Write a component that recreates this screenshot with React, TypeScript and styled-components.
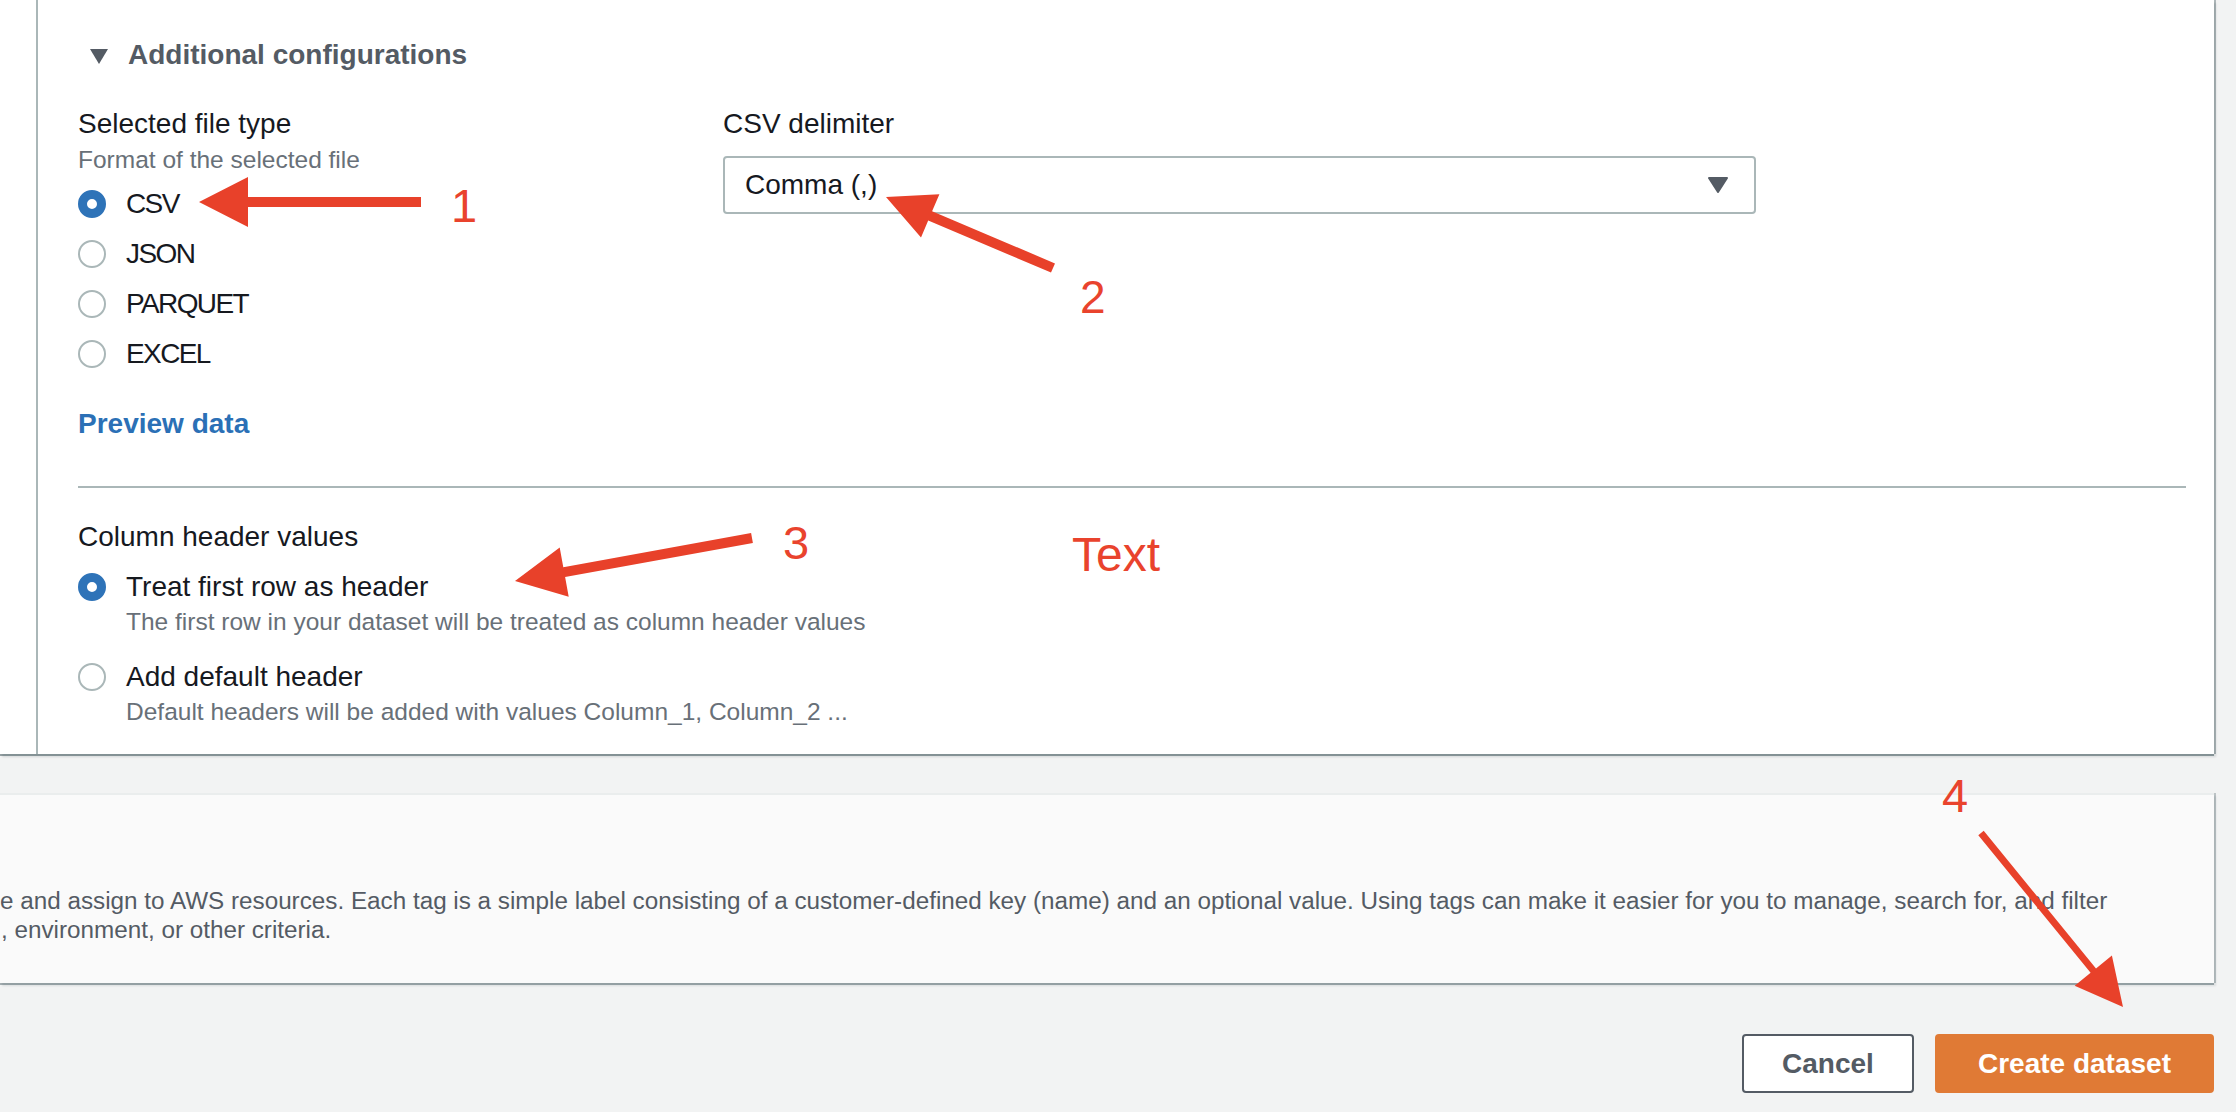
import React from "react";
import styled, { createGlobalStyle } from "styled-components";

const GlobalStyle = createGlobalStyle`
  html, body { margin: 0; padding: 0; background: #f2f3f3; }
  body { font-family: "Liberation Sans", Arial, sans-serif; color: #16191f; }
  * { box-sizing: border-box; }
`;

const Page = styled.div`
  position: relative;
  width: 2236px;
  height: 1112px;
  overflow: hidden;
  background: #f2f3f3;
  display: flex;
  flex-direction: column;
  padding-right: 22px;
`;

const ConfigPanel = styled.section`
  flex: none;
  height: 754px;
  background: #ffffff;
  padding-left: 36px;
  box-shadow: 0 2px 0 0 rgba(0, 28, 36, 0.38), 2px 0 0 0 rgba(0, 28, 36, 0.28),
    2px 3px 2px 0 rgba(0, 28, 36, 0.12);
`;

const PanelInner = styled.div`
  height: 100%;
  border-left: 2px solid #aab7b8;
  padding: 35px 28px 0 40px;
`;

const SectionHeader = styled.div`
  display: flex;
  align-items: center;
  gap: 20px;
  padding-left: 12px;
  font-size: 28px;
  font-weight: 700;
  line-height: 40px;
  color: #545b64;
`;

const Caret = styled.svg`
  flex: none;
  margin-top: 3px;
`;

const FieldsGrid = styled.div`
  display: grid;
  grid-template-columns: 605px 1033px;
  column-gap: 40px;
  margin-top: 29px;
`;

const Field = styled.div`
  display: flex;
  flex-direction: column;
`;

const FieldLabel = styled.div<{ $gap?: number }>`
  font-size: 28px;
  line-height: 40px;
  color: #16191f;
  margin-top: ${(p) => p.$gap ?? 0}px;
`;

const FieldDescription = styled.div`
  font-size: 24.5px;
  line-height: 32px;
  color: #687078;
`;

const RadioList = styled.div`
  display: flex;
  flex-direction: column;
  margin-top: 3px;
`;

const RadioRow = styled.label`
  display: flex;
  align-items: center;
  gap: 20px;
  height: 50px;
`;

const RadioCircle = styled.span<{ $checked?: boolean }>`
  flex: none;
  display: block;
  width: 28px;
  height: 28px;
  border-radius: 50%;
  background: #ffffff;
  border: ${(p) => (p.$checked ? "9px solid #2e73b8" : "2px solid #aab7b8")};
`;

const RadioLabel = styled.span`
  font-size: 28px;
  line-height: 40px;
  color: #16191f;
`;

const FileTypeLabel = styled(RadioLabel)`
  letter-spacing: -1.6px;
`;

const PreviewLink = styled.a`
  display: block;
  margin-top: 25px;
  font-size: 28px;
  font-weight: 700;
  line-height: 40px;
  color: #2b70b6;
  text-decoration: none;
`;

const Divider = styled.hr`
  margin: 42px 0 0;
  border: none;
  height: 2px;
  background: #aab7b8;
`;

const OptionBlock = styled.label<{ $gap: number }>`
  display: grid;
  grid-template-columns: 28px 1fr;
  column-gap: 20px;
  margin-top: ${(p) => p.$gap}px;
`;

const OptionRadioCell = styled.span`
  height: 40px;
  display: flex;
  align-items: center;
`;

const OptionText = styled.div`
  display: flex;
  flex-direction: column;
`;

const OptionDescription = styled.div`
  font-size: 24.5px;
  line-height: 30px;
  color: #687078;
`;

const SelectBox = styled.div`
  margin-top: 12px;
  height: 58px;
  border: 2px solid #aab7b8;
  border-radius: 4px;
  display: flex;
  align-items: center;
  justify-content: space-between;
  padding: 0 26px 0 20px;
  font-size: 28px;
  line-height: 40px;
  color: #16191f;
  background: #ffffff;
`;

const TagsPanel = styled.section`
  flex: none;
  margin-top: 39px;
  height: 190px;
  background: #fafafa;
  border-top: 2px solid #eaeded;
  padding-top: 91px;
  overflow: hidden;
  box-shadow: 0 2px 0 0 rgba(0, 28, 36, 0.32), 2px 0 0 0 rgba(0, 28, 36, 0.22),
    2px 3px 2px 0 rgba(0, 28, 36, 0.1);
`;

const TagsLine = styled.div<{ $indent?: number }>`
  white-space: nowrap;
  font-size: 24.25px;
  line-height: 29px;
  color: #545b64;
  margin-left: ${(p) => p.$indent ?? 0}px;
`;

const ButtonBar = styled.div`
  margin-top: 51px;
  display: flex;
  justify-content: flex-end;
  gap: 21px;
`;

const Button = styled.button<{ $primary?: boolean; $width: number }>`
  width: ${(p) => p.$width}px;
  height: 59px;
  border-radius: 4px;
  font-family: "Liberation Sans", Arial, sans-serif;
  font-size: 28px;
  font-weight: 700;
  line-height: 40px;
  padding: 0;
  cursor: pointer;
  border: 2px solid ${(p) => (p.$primary ? "#e07a35" : "#545b64")};
  background: ${(p) => (p.$primary ? "#e07a35" : "#ffffff")};
  color: ${(p) => (p.$primary ? "#ffffff" : "#545b64")};
`;

const Overlay = styled.div`
  position: absolute;
  inset: 0;
  pointer-events: none;
`;

const OverlaySvg = styled.svg`
  position: absolute;
  left: 0;
  top: 0;
`;

const Note = styled.span<{ $x: number; $y: number; $size: number }>`
  position: absolute;
  left: ${(p) => p.$x}px;
  top: ${(p) => p.$y}px;
  font-family: "Liberation Sans", Arial, sans-serif;
  font-size: ${(p) => p.$size}px;
  line-height: 1;
  color: #e9432d;
`;

type Pt = [number, number];

function arrowPoints(tail: Pt, tip: Pt, headLen: number, headW: number, shaftW: number): string {
  const dx = tip[0] - tail[0];
  const dy = tip[1] - tail[1];
  const len = Math.hypot(dx, dy);
  const ux = dx / len;
  const uy = dy / len;
  const px = -uy;
  const py = ux;
  const bx = tip[0] - ux * headLen;
  const by = tip[1] - uy * headLen;
  const hs = shaftW / 2;
  const hh = headW / 2;
  const pts: Pt[] = [
    [tail[0] + px * hs, tail[1] + py * hs],
    [bx + px * hs, by + py * hs],
    [bx + px * hh, by + py * hh],
    tip,
    [bx - px * hh, by - py * hh],
    [bx - px * hs, by - py * hs],
    [tail[0] - px * hs, tail[1] - py * hs],
  ];
  return pts.map((p) => `${p[0].toFixed(1)},${p[1].toFixed(1)}`).join(" ");
}

const arrows = [
  { tail: [421, 202] as Pt, tip: [199, 202] as Pt, head: 49, width: 50, shaft: 10 },
  { tail: [1053, 268] as Pt, tip: [886, 197] as Pt, head: 48, width: 47, shaft: 10 },
  { tail: [752, 538] as Pt, tip: [515, 581] as Pt, head: 50, width: 50, shaft: 10 },
  { tail: [1981, 833] as Pt, tip: [2123, 1007] as Pt, head: 47, width: 48, shaft: 7 },
];

const notes = [
  { text: "1", x: 451, y: 182, size: 47 },
  { text: "2", x: 1080, y: 274, size: 46 },
  { text: "3", x: 783, y: 519, size: 47 },
  { text: "4", x: 1942, y: 772, size: 47 },
  { text: "Text", x: 1072, y: 531, size: 48 },
];

const fileTypes = [
  { label: "CSV", checked: true },
  { label: "JSON", checked: false },
  { label: "PARQUET", checked: false },
  { label: "EXCEL", checked: false },
];

export default function App() {
  return (
    <>
      <GlobalStyle />
      <Page>
        <ConfigPanel>
          <PanelInner>
            <SectionHeader>
              <Caret width="18" height="15" viewBox="0 0 18 15">
                <polygon points="0,0 18,0 9,15" fill="#545b64" />
              </Caret>
              Additional configurations
            </SectionHeader>

            <FieldsGrid>
              <Field>
                <FieldLabel>Selected file type</FieldLabel>
                <FieldDescription>Format of the selected file</FieldDescription>
                <RadioList>
                  {fileTypes.map((t) => (
                    <RadioRow key={t.label}>
                      <RadioCircle $checked={t.checked} />
                      <FileTypeLabel>{t.label}</FileTypeLabel>
                    </RadioRow>
                  ))}
                </RadioList>
              </Field>
              <Field>
                <FieldLabel>CSV delimiter</FieldLabel>
                <SelectBox>
                  <span>Comma (,)</span>
                  <svg width="20" height="16" viewBox="0 0 20 16">
                    <polygon
                      points="1,1 19,1 10,15"
                      fill="#545b64"
                      stroke="#545b64"
                      strokeWidth="2"
                      strokeLinejoin="round"
                    />
                  </svg>
                </SelectBox>
              </Field>
            </FieldsGrid>

            <PreviewLink href="#">Preview data</PreviewLink>

            <Divider />

            <FieldLabel $gap={29}>Column header values</FieldLabel>
            <OptionBlock $gap={10}>
              <OptionRadioCell>
                <RadioCircle $checked />
              </OptionRadioCell>
              <OptionText>
                <RadioLabel>Treat first row as header</RadioLabel>
                <OptionDescription>
                  The first row in your dataset will be treated as column header values
                </OptionDescription>
              </OptionText>
            </OptionBlock>
            <OptionBlock $gap={20}>
              <OptionRadioCell>
                <RadioCircle />
              </OptionRadioCell>
              <OptionText>
                <RadioLabel>Add default header</RadioLabel>
                <OptionDescription>
                  Default headers will be added with values Column_1, Column_2 ...
                </OptionDescription>
              </OptionText>
            </OptionBlock>
          </PanelInner>
        </ConfigPanel>

        <TagsPanel>
          <TagsLine>
            e and assign to AWS resources. Each tag is a simple label consisting of a customer-defined key
            (name) and an optional value. Using tags can make it easier for you to manage, search for, and
            filter
          </TagsLine>
          <TagsLine $indent={1}>, environment, or other criteria.</TagsLine>
        </TagsPanel>

        <ButtonBar>
          <Button $width={172}>Cancel</Button>
          <Button $primary $width={279}>
            Create dataset
          </Button>
        </ButtonBar>

        <Overlay>
          <OverlaySvg width="2236" height="1112" viewBox="0 0 2236 1112">
            {arrows.map((a, i) => (
              <polygon key={i} points={arrowPoints(a.tail, a.tip, a.head, a.width, a.shaft)} fill="#e8412a" />
            ))}
          </OverlaySvg>
          {notes.map((n) => (
            <Note key={n.text} $x={n.x} $y={n.y} $size={n.size}>
              {n.text}
            </Note>
          ))}
        </Overlay>
      </Page>
    </>
  );
}
